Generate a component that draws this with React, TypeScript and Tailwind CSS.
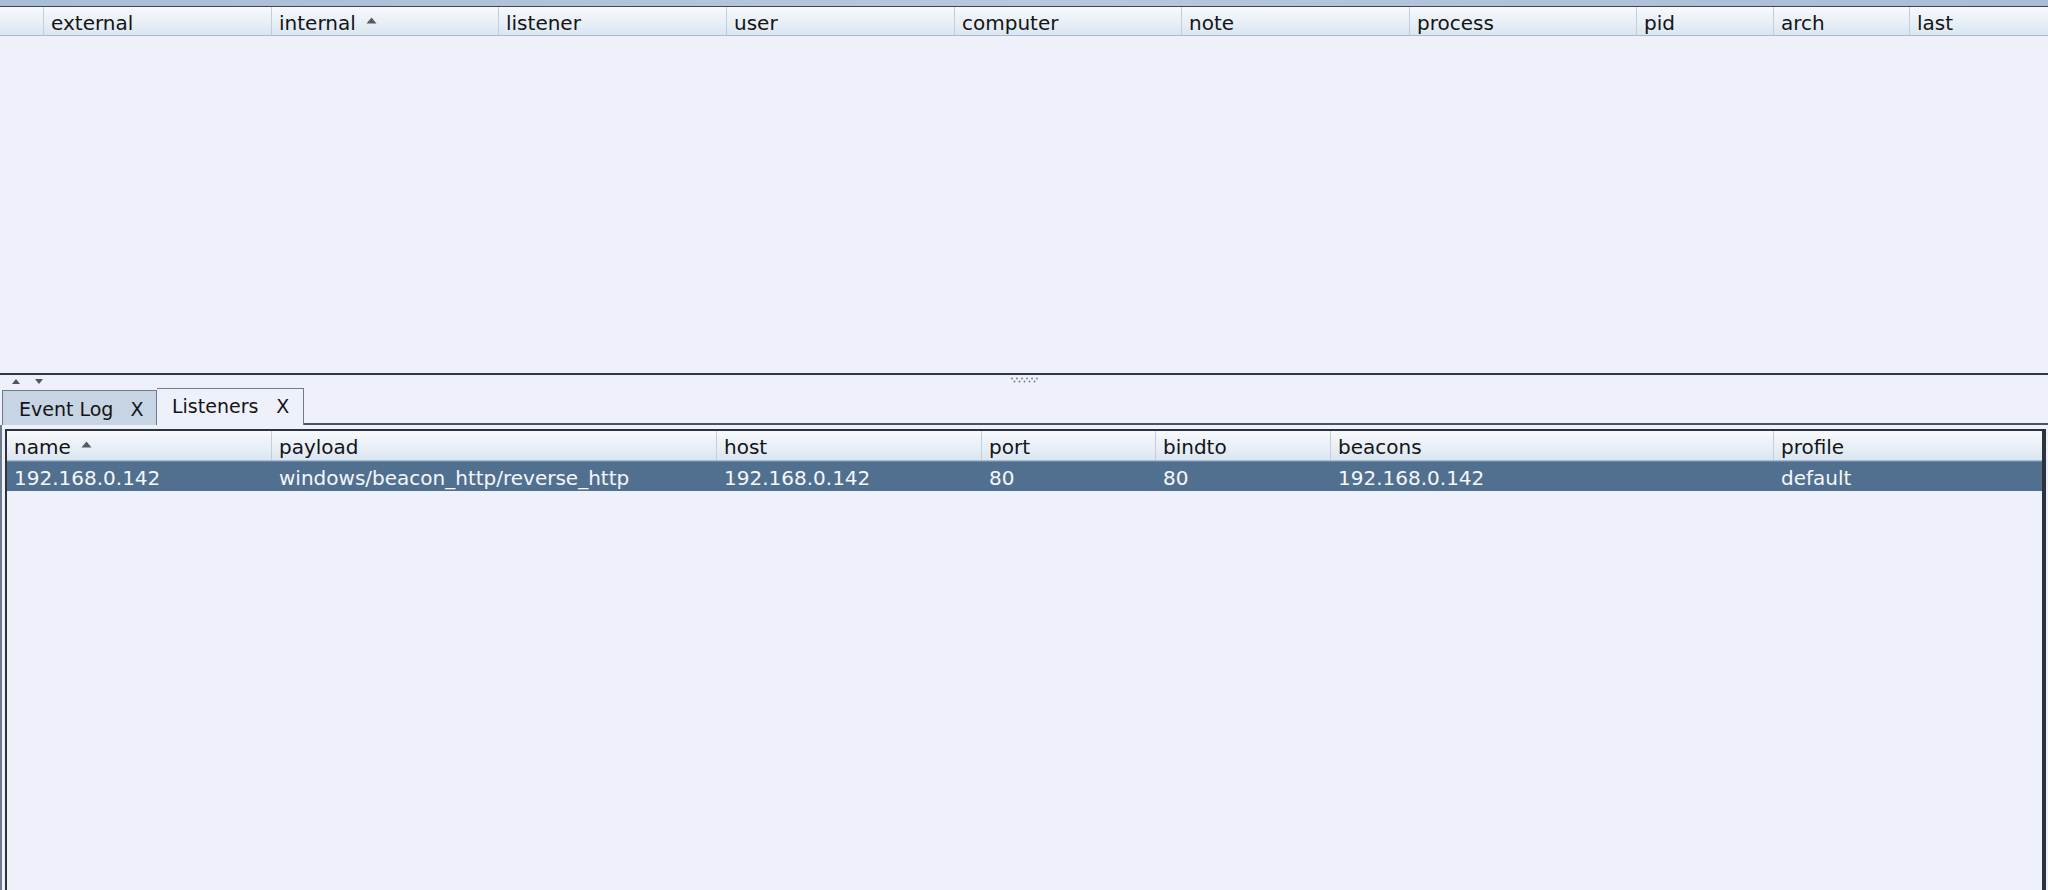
import React from 'react';

const topColumns: { label: string; width: string; sorted?: boolean }[] = [
    { label: '', width: 'w-[44px]' },
    { label: 'external', width: 'w-[228px]' },
    { label: 'internal', width: 'w-[227px]', sorted: true },
    { label: 'listener', width: 'w-[228px]' },
    { label: 'user', width: 'w-[228px]' },
    { label: 'computer', width: 'w-[227px]' },
    { label: 'note', width: 'w-[228px]' },
    { label: 'process', width: 'w-[227px]' },
    { label: 'pid', width: 'w-[137px]' },
    { label: 'arch', width: 'w-[136px]' },
    { label: 'last', width: 'flex-1' },
];

const listenerColumns: { label: string; width: string; sorted?: boolean }[] = [
    { label: 'name', width: 'w-[265px]', sorted: true },
    { label: 'payload', width: 'w-[445px]' },
    { label: 'host', width: 'w-[265px]' },
    { label: 'port', width: 'w-[174px]' },
    { label: 'bindto', width: 'w-[175px]' },
    { label: 'beacons', width: 'w-[443px]' },
    { label: 'profile', width: 'flex-1' },
];

const listeners = [
    ['192.168.0.142', 'windows/beacon_http/reverse_http', '192.168.0.142', '80', '80', '192.168.0.142', 'default'],
];

function SortArrow() {
    return (
        <svg width="11" height="7" viewBox="0 0 11 7" className="ml-[10px] mb-[5px]">
            <path d="M0.5 6.5 L5.5 0.5 L10.5 6.5 Z" fill="#555b63" />
        </svg>
    );
}

function HeaderCell({ label, width, sorted, last }: { label: string; width: string; sorted?: boolean; last?: boolean }) {
    return (
        <div
            className={`${width} flex h-full shrink-0 items-center pt-[3px] pl-[7px] ${last ? '' : 'border-r border-[#c2cedb]'}`}
        >
            <span>{label}</span>
            {sorted && <SortArrow />}
        </div>
    );
}

export default function App() {
    return (
        <div
            className="flex h-[890px] w-[2048px] flex-col overflow-hidden bg-[#eef1fa] text-[20px] text-[#141414]"
            style={{ fontFamily: '"DejaVu Sans", "Liberation Sans", sans-serif' }}
        >
            {/* strip left over from the window above */}
            <div className="h-[6px] bg-gradient-to-r from-[#a9bdd5] via-[#b7c8dc] to-[#a9bdd5]" />
            <div className="h-px bg-[#3b4655]" />

            {/* beacons table header */}
            <div className="flex h-[29px] border-b border-[#a7bcd2] bg-gradient-to-b from-[#f8fafd] to-[#dbe6f1]">
                {topColumns.map((c, i) => (
                    <HeaderCell key={i} {...c} last={i === topColumns.length - 1} />
                ))}
            </div>
            <div className="h-[337px]" />

            {/* split pane divider */}
            <div className="h-[2px] bg-[#2f3946]" />
            <div className="relative flex h-[13px] items-center">
                <svg width="8" height="5" viewBox="0 0 8 5" className="ml-[12px]">
                    <path d="M0 5 L4 0 L8 5 Z" fill="#555" />
                </svg>
                <svg width="8" height="5" viewBox="0 0 8 5" className="ml-[15px]">
                    <path d="M0 0 L4 5 L8 0 Z" fill="#555" />
                </svg>
                <svg width="28" height="6" viewBox="0 0 28 6" className="absolute left-[1010px] top-[2px]">
                    {[0, 1, 2, 3, 4, 5].map((i) => (
                        <circle key={`a${i}`} cx={2 + i * 5} cy={1.5} r={0.9} fill="#777" />
                    ))}
                    {[0, 1, 2, 3, 4].map((i) => (
                        <circle key={`b${i}`} cx={4.5 + i * 5} cy={4.5} r={0.9} fill="#777" />
                    ))}
                </svg>
            </div>

            {/* tabs */}
            <div className="flex h-[37px] items-end text-[19px]">
                <div className="ml-[2px] flex h-[35px] w-[155px] items-center border border-b-0 border-[#6d7c8c] bg-[#c6d4e3] pt-[2px] pl-[16px]">
                    <span>Event Log</span>
                    <span className="ml-[17px]">X</span>
                </div>
                <div className="flex h-[37px] w-[147px] items-center border-t border-r border-[#6d7c8c] bg-[#eef1fa] pb-[2px] pl-[15px]">
                    <span>Listeners</span>
                    <span className="ml-[18px]">X</span>
                </div>
                <div className="h-[2px] flex-1 bg-[#4a5462]" />
            </div>

            {/* listeners panel */}
            <div className="flex flex-1 border-l-2 border-[#6d7c8c] pt-[4px] pr-[2px] pl-[3px]">
                <div className="flex flex-1 flex-col border-t-2 border-r-4 border-l-2 border-[#2d333b]">
                    <div className="flex h-[30px] border-b border-[#a7bcd2] bg-gradient-to-b from-[#f8fafd] to-[#dbe6f1]">
                        {listenerColumns.map((c, i) => (
                            <HeaderCell key={i} {...c} last={i === listenerColumns.length - 1} />
                        ))}
                    </div>
                    {listeners.map((row, r) => (
                        <div key={r} className="flex h-[30px] border-t border-[#6f8aa6] bg-[#51708f] text-[#f4f7fb]">
                            {row.map((cell, i) => (
                                <div
                                    key={i}
                                    className={`${listenerColumns[i].width} flex shrink-0 items-center pt-[2px] pl-[7px]`}
                                >
                                    {cell}
                                </div>
                            ))}
                        </div>
                    ))}
                    <div className="flex-1" />
                </div>
            </div>
        </div>
    );
}
